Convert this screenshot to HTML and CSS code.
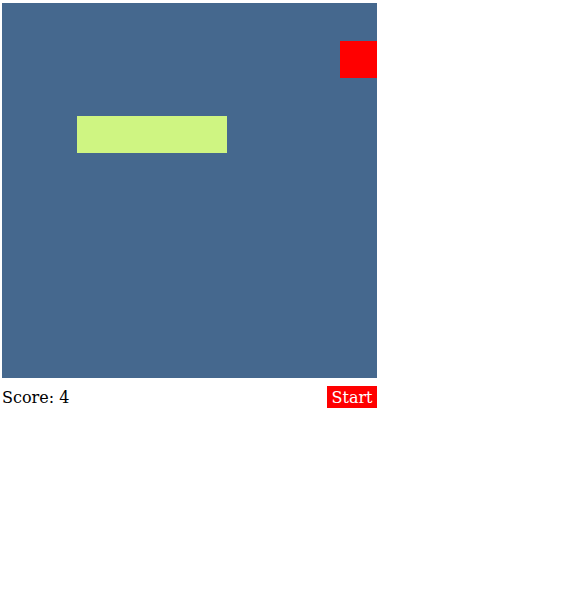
FILE: index.html
```html
<!DOCTYPE html>
<html>
<head>
<meta charset="utf-8">
<link rel="stylesheet" href="styles.css">
</head>
<body>
<div class="game">
  <div class="board">
    <div class="cell snake" style="left:75px;top:112.5px;width:150px;"></div>
    <div class="cell food" style="left:337.5px;top:37.5px;"></div>
  </div>
  <div class="bar">
    <span class="score">Score: 4</span>
    <button class="start">Start</button>
  </div>
</div>
</body>
</html>
```
FILE: styles.css
```css
html, body { margin: 0; padding: 0; background: #fff; }
.game {
  width: 375px;
  padding: 3px 0 0 2px;
  font-family: "DejaVu Serif", serif;
}
.board {
  position: relative;
  width: 375px;
  height: 375px;
  background: #45688e;
}
.cell {
  position: absolute;
  width: 37.5px;
  height: 37.5px;
}
.snake { background: #cff582; }
.food { background: #ff0000; }
.bar {
  display: flex;
  justify-content: space-between;
  align-items: center;
  margin-top: 8px;
  height: 22px;
}
.score {
  font-size: 16px;
  color: #000;
}
.start {
  font-family: "DejaVu Serif", serif;
  font-size: 16px;
  background: #ff0000;
  color: #fff;
  border: none;
  height: 22px;
  width: 50px;
  padding: 0;
  margin: 0;
}
```
